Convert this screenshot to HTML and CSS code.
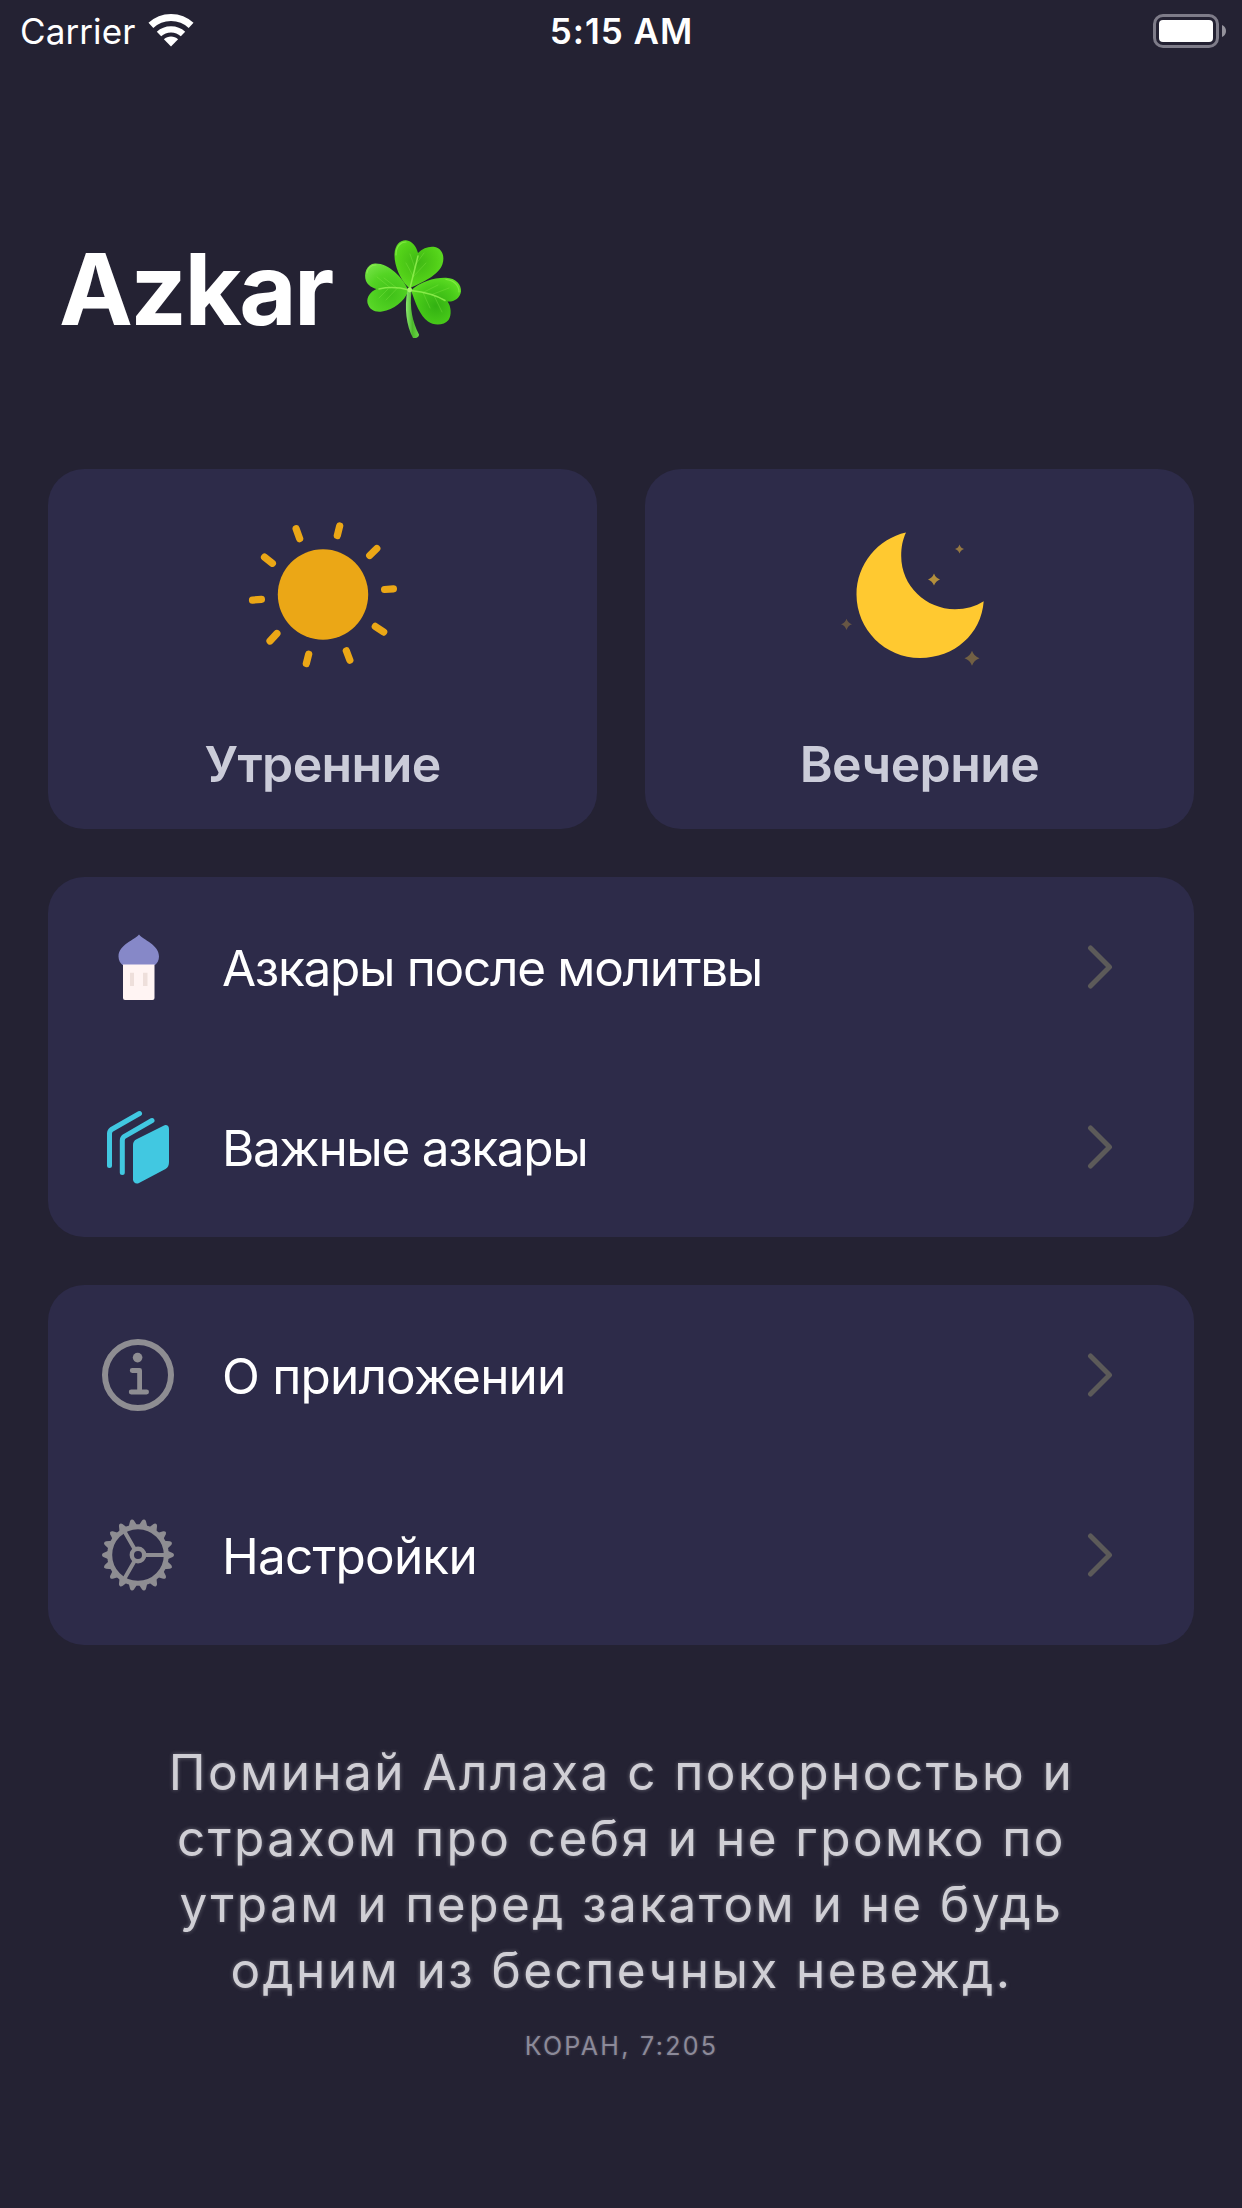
FILE: index.html
```html
<!DOCTYPE html>
<html lang="ru">
<head>
<meta charset="utf-8">
<title>Azkar</title>
<link rel="stylesheet" href="styles.css">
</head>
<body>
<div class="screen">
  <header class="status">
    <div class="status-left">
      <span class="carrier">Carrier</span>
      <svg class="wifi" viewBox="0 0 46 34" width="46" height="34">
        <path d="M23 33.5 L15.9 26.2 C19.8 22.6 26.2 22.6 30.1 26.2 Z" fill="#fff"/>
        <path d="M11 21 C17.6 14.8 28.4 14.8 35 21" fill="none" stroke="#fff" stroke-width="6.4"/>
        <path d="M2.9 12.4 C14 1.8 32 1.8 43.1 12.4" fill="none" stroke="#fff" stroke-width="7"/>
      </svg>
    </div>
    <span class="time">5:15 AM</span>
    <div class="status-right">
      <svg viewBox="0 0 74 34" width="74" height="34">
        <rect x="1.5" y="1.5" width="63" height="31" rx="8.5" fill="none" stroke="#7e7c89" stroke-width="3"/>
        <rect x="6" y="6" width="54" height="22" rx="4" fill="#fff"/>
        <path d="M69 11 C74.4 13 74.4 21 69 23 Z" fill="#94929c"/>
      </svg>
    </div>
  </header>

  <h1 class="title">
    <span>Azkar</span>
    <svg class="clover" viewBox="0 0 130 120" width="130" height="120">
      <defs>
        <radialGradient id="leafTop" gradientUnits="userSpaceOnUse" cx="68" cy="32" r="34">
          <stop offset="0" stop-color="#3fb814"/><stop offset="0.55" stop-color="#52d018"/><stop offset="1" stop-color="#66e42c"/>
        </radialGradient>
        <radialGradient id="leafLeft" gradientUnits="userSpaceOnUse" cx="40" cy="64" r="34">
          <stop offset="0" stop-color="#3fc018"/><stop offset="0.6" stop-color="#54d424"/><stop offset="1" stop-color="#74e244"/>
        </radialGradient>
        <radialGradient id="leafRight" gradientUnits="userSpaceOnUse" cx="86" cy="76" r="34">
          <stop offset="0" stop-color="#32b012"/><stop offset="0.6" stop-color="#4acc1a"/><stop offset="1" stop-color="#66e428"/>
        </radialGradient>
        <linearGradient id="stem" x1="0" x2="1" y1="0" y2="0">
          <stop offset="0" stop-color="#8be870"/><stop offset="0.5" stop-color="#4cb82c"/><stop offset="1" stop-color="#6bd648"/>
        </linearGradient>
      </defs>
      <path d="M59 58 C50 50 44 35 44.500 24 C45 15 50 10 56 10.300 C62 10.800 66 16 68 23 C73 18 79 16 85 17 C92 18.500 95 26 92.500 34 C89 45 73 52 60.500 58 Z" fill="url(#leafTop)"/>
      <path d="M58 60 C53 47 38 33 25 33.500 C16.500 34 13.500 44 16 51 C18 55.500 22 57.500 26.500 59 C20 62 16.500 67 17.500 73 C19.500 80 25 82.500 32 81.500 C44 80 54 71 58 62 Z" fill="url(#leafLeft)"/>
      <path d="M61.500 60 C70 52 84 47.500 96 47.800 C106 48 111.500 55 111 61.500 C110 68.500 104 72 97.500 71.500 C101 76 102 85 98.500 90 C94 95.500 84 96 78 91.500 C70 86 65 72 61.500 61.500 Z" fill="url(#leafRight)"/>
      <g fill="none" stroke="#96f254" stroke-linecap="round">
        <path d="M60 58 L68 26" stroke-width="1.500" opacity=".8"/>
        <path d="M63 46 L56 33 M65 38 L60 24 M63 47 L76 33 M66 34 L74 23" stroke-width=".7" opacity=".4"/>
        <path d="M59 60 C48 57 38 57 29 59" stroke-width="1.500" opacity=".8"/>
        <path d="M47 58 L34 48 M40 57.500 L27 47 M47 58.500 L36 70 M38 59 L29 68" stroke-width=".7" opacity=".4"/>
        <path d="M61 60.500 C74 62 86 65 95 70.500" stroke-width="1.500" opacity=".8"/>
        <path d="M73 62.500 L88 55 M82 64.500 L99 58 M73 62.500 L80 78 M84 65.500 L92 82" stroke-width=".7" opacity=".4"/>
        <path d="M46 25 C46 16 51 12 56 12" stroke-width="1.200" opacity=".6"/>
        <path d="M17 43 C18 37 21 35 26 35" stroke-width="1.200" opacity=".6"/>
        <path d="M96 49.500 C104 50 109 56 109 62" stroke-width="1.200" opacity=".6"/>
      </g>
      <path d="M57.500 60 L61.500 61 C59.500 78 62.500 92 69 104.500 C69 107.500 65.500 108.500 63 108 C56.500 96 54 78 57.500 60 Z" fill="url(#stem)"/>
      <circle cx="59.700" cy="60" r="2.400" fill="#a4f46a"/>
    </svg>
  </h1>

  <main class="content">
    <section class="tiles">
      <a class="card tile">
        <svg class="tile-icon" viewBox="-75 -75 150 150" width="150" height="150">
          <circle cy="-.5" r="45.200" fill="#eba716"/>
          <g stroke="#eba716" stroke-width="7.200" stroke-linecap="round">
            <path d="M-26.900-66.300L-23.300-56.300M16.700-69.100L14.300-59.400M53.800-46.500L46.700-39.500M70.400-6.200L61.600-5.500M60.700 37.100L52.300 31.400M26.900 65.200L23.300 55.800M-16.700 68.600L-14.300 59.200M-53 46L-46.100 38.500M-70.500 5.100L-61.600 4.400M-58.500-37.900L-50.600-31.700"/>
          </g>
        </svg>
        <span class="tile-label">Утренние</span>
      </a>
      <a class="card tile">
        <svg class="tile-icon" viewBox="-75 -75 150 150" width="150" height="150">
          <path d="M-14-62.600C-17.500-55-18.800-48-18.800-39C-18.800-9 6 14.200 35 14.200C46 14.200 55.500 11.500 63.700 6.300C61.300 39 34.500 63 0 63C-35 63-63.500 34.500-63.500-.5C-63.500-31-42-56.500-14-62.600Z" fill="#ffc930"/>
          <path d="M39.500-50.500Q40.500-47 44-46Q40.500-45 39.500-41.500Q38.500-45 35-46Q38.500-47 39.500-50.500Z" fill="#957842"/>
          <path d="M14-21.500Q15.700-17 20-15.500Q15.700-14 14-9.500Q12.300-14 8-15.500Q12.300-17 14-21.500Z" fill="#b38f3c"/>
          <path d="M-73.500 23.700Q-72 28-68 29.300Q-72 30.600-73.500 34.900Q-75 30.600-79 29.300Q-75 28-73.500 23.700Z" fill="#675644"/>
          <path d="M52 55.800Q54 61.500 59.500 63.300Q54 65.100 52 70.800Q50 65.100 44.500 63.300Q50 61.500 52 55.800Z" fill="#726044"/>
        </svg>
        <span class="tile-label">Вечерние</span>
      </a>
    </section>

    <section class="card list">
      <a class="row">
        <svg class="row-icon" viewBox="-38 -38 76 76" width="76" height="76">
          <path d="M1-32.500C5-27 21-22.500 21-10.500C21-6.500 19-3.500 17-2H-15.500C-17.500-3.500-19.500-6.500-19.500-10.500C-19.500-22.500-3-27 1-32.500Z" fill="#8688c8"/>
          <path d="M-15-2.500H16.500V31Q16.500 33 14.500 33H-13Q-15 33-15 31Z" fill="#fff4f3"/>
          <path d="M-8 5.700H-4V19H-8ZM5 5.700H9.500V19H5Z" fill="#eedfdb"/>
        </svg>
        <span class="row-label row-label--tight">Азкары после молитвы</span>
        <svg class="chevron" viewBox="0 0 26 44" width="26" height="44"><path d="M3.500 3L22.500 22L3.500 41"/></svg>
      </a>
      <a class="row">
        <svg class="row-icon" viewBox="-38 -38 76 76" width="76" height="76">
          <g fill="none" stroke="#41c8e1" stroke-width="5" stroke-linecap="round" stroke-linejoin="round">
            <path d="M1.500-33.500L-26.500-17.500Q-28.500-16-28.500-13.500V18.500"/>
            <path d="M14-26.500L-13.500-10.700Q-15.700-9.200-15.700-6.500V25.500"/>
          </g>
          <path d="M25.500-21.300C28.500-23 31-21 31-18V15C31 18.500 30 20.500 27.500 22L1 36C-2 37.500-5 35.500-5 32.500V-2C-5-4.500-4-6.500-1.500-7.800Z" fill="#41c8e1"/>
        </svg>
        <span class="row-label row-label--tight">Важные азкары</span>
        <svg class="chevron" viewBox="0 0 26 44" width="26" height="44"><path d="M3.500 3L22.500 22L3.500 41"/></svg>
      </a>
    </section>

    <section class="card list">
      <a class="row">
        <svg class="row-icon" viewBox="-38 -38 76 76" width="76" height="76">
          <circle r="33" fill="none" stroke="#8e8d92" stroke-width="6"/>
          <circle cx="-.4" cy="-17.400" r="4.800" fill="#8e8d92"/>
          <path d="M-5.800-4.500H1.600V17M-6.800 17H8.600" fill="none" stroke="#8e8d92" stroke-width="4.800" stroke-linecap="round" stroke-linejoin="round"/>
        </svg>
        <span class="row-label">О приложении</span>
        <svg class="chevron" viewBox="0 0 26 44" width="26" height="44"><path d="M3.500 3L22.500 22L3.500 41"/></svg>
      </a>
      <a class="row">
        <svg class="row-icon" viewBox="-38 -38 76 76" width="76" height="76">
          <defs>
            <path id="tooth" d="M29-4.500L34.600-2Q36-1.300 36 0Q36 1.300 34.600 2L29 4.500Z"/>
            <g id="teeth"><use href="#tooth"/><use href="#tooth" transform="rotate(20)"/><use href="#tooth" transform="rotate(40)"/></g>
          </defs>
          <g fill="#8e8d92">
            <use href="#teeth"/><use href="#teeth" transform="rotate(60)"/><use href="#teeth" transform="rotate(120)"/><use href="#teeth" transform="rotate(180)"/><use href="#teeth" transform="rotate(240)"/><use href="#teeth" transform="rotate(300)"/>
          </g>
          <g fill="none" stroke="#8e8d92">
            <circle r="28.300" stroke-width="5"/>
            <circle r="6.200" stroke-width="4.400"/>
            <path d="M7.500 0H27M-3.750-6.500L-13.500-23.400M-3.750 6.500L-13.500 23.400" stroke-width="4"/>
          </g>
        </svg>
        <span class="row-label">Настройки</span>
        <svg class="chevron" viewBox="0 0 26 44" width="26" height="44"><path d="M3.500 3L22.500 22L3.500 41"/></svg>
      </a>
    </section>
  </main>

  <footer class="quote">
    <p class="quote-text">Поминай Аллаха с покорностью и<br>страхом про себя и не громко по<br>утрам и перед закатом и не будь<br>одним из беспечных невежд.</p>
    <p class="quote-source">КОРАН, 7:205</p>
  </footer>
</div>
</body>
</html>
```
FILE: styles.css
```css
* {
  box-sizing: border-box;
}

body {
  margin: 0;
  background: #242233;
  color: #fff;
  font-family: Inter, "Liberation Sans", sans-serif;
}

.screen {
  display: flex;
  flex-direction: column;
  width: 1242px;
  height: 2208px;
  overflow: hidden;
}

.status {
  display: grid;
  grid-template-columns: 1fr auto 1fr;
  align-items: center;
  height: 60px;
  padding: 0 15px 0 20px;
  font-size: 35px;
  line-height: 62px;
}

.status-left {
  display: flex;
  gap: 13px;
  letter-spacing: 0.1px;
}

.wifi {
  margin-top: 13px;
}

.time {
  font-weight: 600;
  letter-spacing: 1px;
  margin-left: -4px;
}

.status-right {
  display: flex;
  justify-content: flex-end;
}

.title {
  display: flex;
  align-items: center;
  height: 120px;
  margin: 170px 0 119px;
  padding-left: 59px;
  font-size: 99px;
  font-weight: 700;
  letter-spacing: -2.6px;
  line-height: 118px;
}

.title span {
  width: 291px;
  height: 120px;
}

.content {
  display: flex;
  flex-direction: column;
  gap: 48px;
  padding: 0 48px;
}

.card {
  border-radius: 36px;
  background: #2d2b49;
}

.tiles {
  display: grid;
  grid-template-columns: 1fr 1fr;
  gap: 48px;
}

.tile {
  display: flex;
  flex-direction: column;
  align-items: center;
  height: 360px;
  padding-top: 51px;
}

.tile-icon {
  overflow: visible;
}

.tile-label {
  margin-top: 64px;
  color: #cbccd9;
  font-size: 50px;
  font-weight: 600;
  letter-spacing: -0.6px;
  line-height: 60px;
}

.row {
  display: flex;
  align-items: center;
  height: 180px;
  padding: 0 81px 0 52px;
}

.row-label {
  flex: 1;
  margin-left: 46px;
  padding-top: 2px;
  font-size: 49.5px;
  letter-spacing: -0.8px;
  line-height: 60px;
}

.row-label--tight {
  letter-spacing: -1.3px;
}

.chevron {
  fill: none;
  stroke: #5c5a59;
  stroke-width: 5;
  stroke-linecap: round;
  stroke-linejoin: round;
}

.quote {
  padding: 94px 0 0 1px;
  text-align: center;
}

.quote p {
  margin: 0;
}

.quote-text {
  color: #d0cfd5;
  font-size: 49.5px;
  letter-spacing: 2.45px;
  line-height: 66px;
  text-shadow: 0 0 4px rgba(208, 207, 213, 0.4);
}

.quote .quote-source {
  margin-top: 28px;
  color: #8c8a99;
  font-size: 25px;
  letter-spacing: 2.3px;
  line-height: 30px;
  text-shadow: 0 0 3px rgba(140, 138, 153, 0.4);
}
```
